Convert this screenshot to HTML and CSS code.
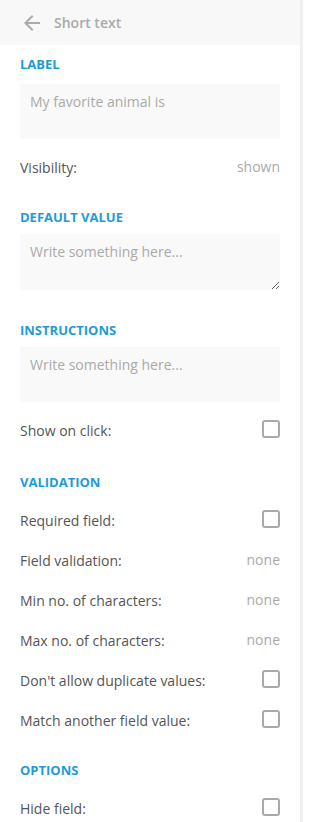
FILE: index.html
```html
<!DOCTYPE html>
<html>
<head>
<meta charset="utf-8">
<link rel="stylesheet" href="styles.css">
</head>
<body>
<div class="panel">
  <header class="header">
    <svg class="back" width="24" height="24" viewBox="0 0 24 24"><path d="M20 11H7.83l5.59-5.59L12 4l-8 8 8 8 1.41-1.41L7.83 13H20v-2z" fill="#aaaaaa"/></svg>
    <span class="title">Short text</span>
  </header>
  <div class="content">
    <section class="section section--first">
      <h3 class="section-title">Label</h3>
      <textarea class="field noresize" placeholder="My favorite animal is"></textarea>
      <div class="row"><span class="row-label">Visibility:</span><span class="row-value">shown</span></div>
    </section>
    <section class="section section--textarea">
      <h3 class="section-title">Default value</h3>
      <textarea class="field tall" placeholder="Write something here..."></textarea>
    </section>
    <section class="section">
      <h3 class="section-title">Instructions</h3>
      <textarea class="field noresize" placeholder="Write something here..."></textarea>
      <div class="row"><span class="row-label">Show on click:</span><span class="check"></span></div>
    </section>
    <section class="section section--wide">
      <h3 class="section-title">Validation</h3>
      <div class="row"><span class="row-label">Required field:</span><span class="check"></span></div>
      <div class="row"><span class="row-label">Field validation:</span><span class="row-value">none</span></div>
      <div class="row"><span class="row-label">Min no. of characters:</span><span class="row-value">none</span></div>
      <div class="row"><span class="row-label">Max no. of characters:</span><span class="row-value">none</span></div>
      <div class="row"><span class="row-label">Don't allow duplicate values:</span><span class="check"></span></div>
      <div class="row"><span class="row-label">Match another field value:</span><span class="check"></span></div>
    </section>
    <section class="section">
      <h3 class="section-title">Options</h3>
      <div class="row"><span class="row-label">Hide field:</span><span class="check"></span></div>
    </section>
  </div>
</div>
</body>
</html>
```

FILE: styles.css
```css
html, body {
  margin: 0;
  padding: 0;
  overflow: hidden;
  background: #ffffff;
}
body {
  font-family: "Open Sans", "Liberation Sans", sans-serif;
  width: 303px;
}
.panel {
  width: 300px;
  border-right: 3px solid #efefef;
  min-height: 822px;
}
.header {
  height: 45px;
  background: #f8f8f8;
  display: flex;
  align-items: center;
  padding-left: 20px;
  box-sizing: border-box;
}
.back {
  display: block;
  margin-right: 10px;
}
.title {
  font-size: 14px;
  font-weight: 600;
  color: #aaaaaa;
}
.content {
  padding: 10px 20px 0;
}
.section + .section {
  margin-top: 22px;
}
.section + .section--wide {
  margin-top: 24px;
}
.section--textarea {
  padding-bottom: 9px;
}
.section-title {
  margin: 0 0 8px;
  font-size: 13px;
  line-height: 18px;
  font-weight: 700;
  text-transform: uppercase;
  color: #1e9bd7;
}
.section--first .section-title {
  margin-bottom: 11px;
}
.field {
  display: block;
  box-sizing: border-box;
  width: 100%;
  height: 55px;
  margin: 2px 0 0;
  padding: 8px 10px;
  border: none;
  outline: none;
  background: #f9f9f9;
  font-family: "Open Sans", "Liberation Sans", sans-serif;
  font-size: 14px;
  line-height: 20px;
  color: #555;
}
.field::placeholder {
  color: #aaaaaa;
}
.noresize {
  resize: none;
}
.tall {
  height: 56px;
  resize: vertical;
}
.field + .row {
  margin-top: 7px;
}
.row {
  height: 40px;
  display: flex;
  align-items: center;
  justify-content: space-between;
  font-size: 14px;
}
.row-label {
  color: #555555;
  padding-top: 3px;
}
.row-value {
  color: #aaaaaa;
}
.check {
  width: 18px;
  height: 18px;
  box-sizing: border-box;
  border: 2px solid #a9a9a9;
  border-radius: 3px;
  margin-top: -1px;
}
```
